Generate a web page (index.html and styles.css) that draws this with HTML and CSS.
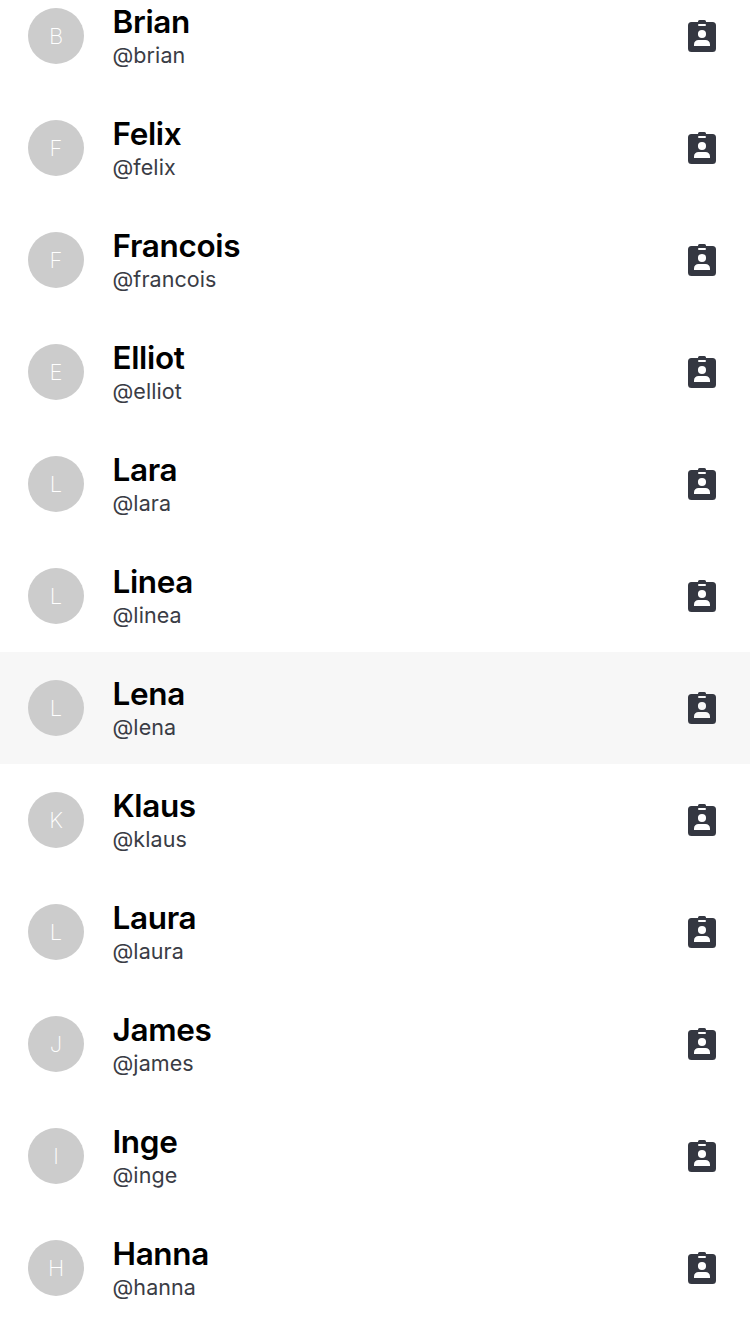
FILE: index.html
```html
<!DOCTYPE html>
<html lang="en">
<head>
<meta charset="utf-8">
<title>Contacts</title>
<link rel="stylesheet" href="styles.css">
</head>
<body>
<svg class="defs" aria-hidden="true">
  <symbol id="badge" viewBox="0 0 28 32">
    <path fill-rule="evenodd" d="M3.500 2H10V1.500Q10 0 11.500 0H16.500Q18 0 18 1.500V2H24.500A3.500 3.500 0 0 1 28 5.500V28.500A3.500 3.500 0 0 1 24.500 32H3.500A3.500 3.500 0 0 1 0 28.500V5.500A3.500 3.500 0 0 1 3.500 2ZM11 4A1 1 0 0 0 11 6H17A1 1 0 0 0 17 4ZM14 9.900A4.050 4.050 0 1 0 14 18A4.050 4.050 0 1 0 14 9.900ZM6 26H22V24.500C22 21.500 20 20 17.500 20H10.500C8 20 6 21.500 6 24.500Z"/>
  </symbol>
</svg>
<ul class="contacts" id="contacts"></ul>
<script src="contacts.js"></script>
</body>
</html>
```

FILE: styles.css
```css
body { margin: 0; background: #fff; font-family: Inter, sans-serif; overflow: hidden; }
.defs { display: none; }
.contacts { list-style: none; margin: -20px 0 0; padding: 0; }
.contact { height: 112px; box-sizing: border-box; padding: 0 34px 0 28px; display: flex; align-items: center; }
.contact--active { background: #f7f7f7; }
.avatar { width: 56px; height: 56px; border-radius: 50%; background: #ccc; color: #fff; display: flex; align-items: center; justify-content: center; font-size: 22px; font-weight: 250; }
.identity { margin-left: 28.5px; flex: 1; }
.name { font-size: 31.500px; line-height: 38px; font-weight: 600; letter-spacing: -0.35px; color: #000; }
.handle { font-size: 21.5px; line-height: 28px; letter-spacing: 0.08px; color: #3a3c45; }
.badge { width: 28px; height: 32px; fill: #343741; }
```

FILE: contacts.js
```js
const names = ["Brian", "Felix", "Francois", "Elliot", "Lara", "Linea", "Lena", "Klaus", "Laura", "James", "Inge", "Hanna"];
const active = "Lena";
document.getElementById("contacts").innerHTML = names.map(name => `
  <li class="contact${name === active ? " contact--active" : ""}">
    <span class="avatar">${name[0]}</span>
    <div class="identity">
      <div class="name">${name}</div>
      <div class="handle">@${name.toLowerCase()}</div>
    </div>
    <svg class="badge"><use href="#badge"/></svg>
  </li>`).join("");
```
